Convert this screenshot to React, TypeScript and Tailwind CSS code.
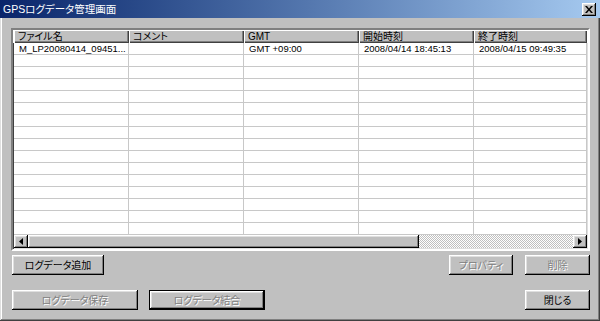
import React from 'react';

const font = "font-['Liberation_Sans','Noto_Sans_CJK_JP',sans-serif] [font-feature-settings:'palt']";

const columns = [
  { label: 'ファイル名', width: 'w-[115px]' },
  { label: 'コメント', width: 'w-[115px]' },
  { label: 'GMT', width: 'w-[115px]' },
  { label: '開始時刻', width: 'w-[115px]' },
  { label: '終了時刻', width: 'w-[113px]' },
];

const rows: string[][] = [
  ['M_LP20080414_09451...', '', 'GMT +09:00', '2008/04/14 18:45:13', '2008/04/15 09:49:35'],
  ...Array.from({ length: 15 }, () => ['', '', '', '', '']),
];

const raised =
  'bg-[#c0c0c0] shadow-[inset_-1px_-1px_#000,inset_1px_1px_#fff,inset_-2px_-2px_#808080,inset_2px_2px_#dfdfdf]';

function WinButton({
  label,
  width,
  disabled,
  isDefault,
}: {
  label: string;
  width: string;
  disabled?: boolean;
  isDefault?: boolean;
}) {
  const face = (
    <div
      className={`${raised} flex h-full w-full items-center justify-center text-[10px] ${
        disabled ? 'text-[#808080] [text-shadow:1px_1px_0_#fff]' : 'text-black'
      }`}
    >
      {label}
    </div>
  );
  if (isDefault) {
    return <div className={`${width} h-[20px] border border-black`}>{face}</div>;
  }
  return <div className={`${width} h-[20px]`}>{face}</div>;
}

function Arrow({ dir }: { dir: 'left' | 'right' }) {
  return (
    <svg width="4" height="7" viewBox="0 0 4 7">
      {dir === 'left' ? <path d="M4 0 L0 3.5 L4 7 Z" fill="#000" /> : <path d="M0 0 L4 3.5 L0 7 Z" fill="#000" />}
    </svg>
  );
}

export default function App() {
  return (
    <div className={`${font} flex h-[321px] w-[600px] flex-col bg-[#c0c0c0]`}>
      {/* Title bar */}
      <div className="flex h-[18px] items-center justify-between bg-gradient-to-r from-[#0a246a] to-[#a6caf0] pl-[3px] pr-[4px]">
        <span className="text-[10.5px] leading-none text-white">GPSログデータ管理画面</span>
        <div className={`${raised} flex h-[13px] w-[14px] items-center justify-center`}>
          <svg width="8" height="7" viewBox="0 0 8 7">
            <path d="M0 0 L2 0 L4 2.5 L6 0 L8 0 L5 3.5 L8 7 L6 7 L4 4.5 L2 7 L0 7 L3 3.5 Z" fill="#000" />
          </svg>
        </div>
      </div>

      {/* Body */}
      <div className="flex flex-1 flex-col pb-[11px] pl-[11px] pr-[10px] pt-[10px] shadow-[inset_-1px_-1px_#404040,inset_1px_0_#dfdfdf,inset_-2px_-2px_#808080,inset_2px_0_#fff]">
        {/* List view */}
        <div className="flex h-[223px] flex-col border-2 border-b-white border-l-[#808080] border-r-white border-t-[#808080]">
          <div className="flex flex-1 flex-col overflow-hidden bg-white shadow-[inset_1px_1px_#404040,inset_-1px_-1px_#dfdfdf]">
            <div className="flex h-[13px] bg-white pl-[1px]">
              {columns.map((c) => (
                <div
                  key={c.label}
                  className={`${c.width} flex h-[13px] shrink-0 items-center bg-[#c0c0c0] pl-[4px] text-[10px] leading-none text-black shadow-[inset_1px_1px_#fff,inset_-1px_-1px_#404040,inset_-2px_-2px_#808080]`}
                >
                  {c.label}
                </div>
              ))}
            </div>
            <div className="flex flex-1 flex-col pl-[1px]">
              {rows.map((r, i) => (
                <div key={i} className="flex h-[12px] shrink-0">
                  {r.map((cell, j) => (
                    <div
                      key={j}
                      className={`${columns[j].width} flex h-[12px] shrink-0 items-center overflow-hidden whitespace-nowrap border-b border-r border-[#c8c8c8] pl-[5px] text-[9.5px] leading-none text-black`}
                    >
                      {cell}
                    </div>
                  ))}
                </div>
              ))}
            </div>
            {/* Horizontal scrollbar */}
            <div className="flex h-[14px] shrink-0 pl-[1px] pr-[1px] pb-[1px]">
              <div className={`${raised} flex w-[14px] items-center justify-center`}>
                <Arrow dir="left" />
              </div>
              <div className={`${raised} w-[391px]`} />
              <div className="flex-1 [background-image:repeating-conic-gradient(#fff_0_25%,#c0c0c0_0_50%)] [background-size:2px_2px]" />
              <div className={`${raised} flex w-[14px] items-center justify-center`}>
                <Arrow dir="right" />
              </div>
            </div>
          </div>
        </div>

        {/* Button row 1 */}
        <div className="mt-[4px] flex h-[21px] items-start justify-between pl-[1px]">
          <WinButton label="ログデータ追加" width="w-[92px]" />
          <div className="flex gap-[12px]">
            <WinButton label="プロパティ" width="w-[64px]" disabled />
            <WinButton label="削除" width="w-[65px]" disabled />
          </div>
        </div>

        {/* Button row 2 */}
        <div className="mt-[14px] flex h-[20px] items-start justify-between pl-[1px]">
          <div className="flex gap-[11px]">
            <WinButton label="ログデータ保存" width="w-[126px]" disabled />
            <WinButton label="ログデータ結合" width="w-[116px]" disabled isDefault />
          </div>
          <WinButton label="閉じる" width="w-[65px]" />
        </div>
      </div>
    </div>
  );
}
